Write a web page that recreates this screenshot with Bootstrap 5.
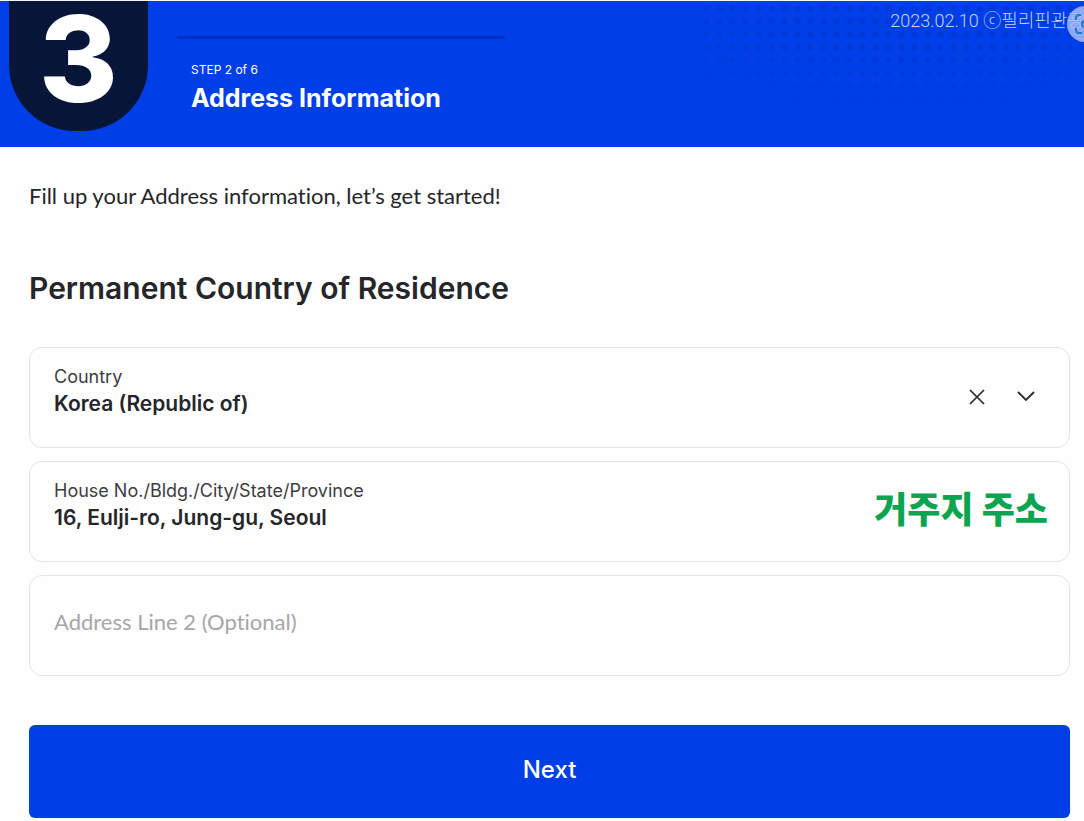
<!DOCTYPE html>
<html lang="en">
<head>
<meta charset="utf-8">
<meta name="viewport" content="width=device-width, initial-scale=1">
<title>Address Information</title>
<link href="https://cdn.jsdelivr.net/npm/bootstrap@5.3.0/dist/css/bootstrap.min.css" rel="stylesheet">
<style>
:root { --brand: #003fe8; --navy: #071638; --ink: #25252a; }
body { font-family: Lato, "Noto Sans CJK KR", sans-serif; font-variant-ligatures: none; color: var(--ink); background: #fefefe; }
.step-header { background: var(--brand); border-top: 1px solid #f4f6fd; min-height: 147px; padding-left: 9px; gap: 29px; }
.step-number { width: 139px; height: 130px; background: var(--navy); border-radius: 0 0 66px 66px; font: 800 120px/116px Inter, sans-serif; }
.step-line { width: 328px; height: 3px; margin-top: 35px; background: #0030c8; }
.step-copy { padding: 22px 0 0 14px; }
.step-count { font-size: 12px; line-height: 18px; font-family: Inter, sans-serif; }
.step-title { font: 700 25px/38px Inter, sans-serif; }
.dots { top: 0; right: 0; width: 384px; height: 117px; background: radial-gradient(circle at 50% 50%, #0038d6 2px, transparent 4px) 0 1px / 13px 13px; -webkit-mask-image: radial-gradient(ellipse 90% 100% at 55% 0, #000 40%, transparent 100%); mask-image: radial-gradient(ellipse 90% 100% at 55% 0, #000 40%, transparent 100%); }
.stamp { top: 7px; right: 0; font: 300 18px/26px Roboto, "Noto Sans CJK KR", sans-serif; color: #c5d2fb; }
.scan { top: 5px; right: -19px; width: 36px; height: 36px; background: rgba(160, 184, 248, .88); }
.page-body { padding: 32px 14px 3px 29px; }
.intro { font-size: 22px; line-height: 34px; margin-bottom: 54px; }
.section-title { font: 600 30px/42px Inter, sans-serif; margin-bottom: 38px; }
.field-list { gap: 13px; }
.field-box { border: 1px solid #e4e4e6; border-radius: 13px; height: 101px; padding: 0 24px; }
.field-box label { font: 400 18px/24px Inter, sans-serif; color: #3d3d42; }
.field-box input, .field-box select { appearance: none; border: 0; outline: 0; padding: 0; background: transparent; font: 600 21px/30px Inter, sans-serif; height: 30px; color: var(--ink); }
.field-box input::placeholder { color: #a6a6a8; font: 400 22px/30px Lato, sans-serif; font-variant-ligatures: none; }
.field-text { padding-bottom: 12px; }
.field-optional { padding-bottom: 6px; }
.field-actions { gap: 32px; padding: 0 10px 2px 0; }
.field-note { font: 900 36px/44px "Noto Sans CJK KR", sans-serif; color: #0ba450; margin-right: -3px; padding-bottom: 10px; }
.next-btn { background: var(--brand); color: #fff; height: 93px; border-radius: 6px; font: 500 24px/32px Inter, sans-serif; margin-top: 49px; border: 0; padding-bottom: 10px; }
</style>
</head>
<body>
<header class="step-header d-flex align-items-start position-relative overflow-hidden text-white">
  <div class="dots position-absolute"></div>
  <div class="step-number text-center flex-shrink-0">3</div>
  <div>
    <div class="step-line"></div>
    <div class="step-copy">
      <p class="step-count mb-0">STEP 2 of 6</p>
      <h1 class="step-title mb-0">Address Information</h1>
    </div>
  </div>
  <div class="stamp position-absolute text-nowrap">2023.02.10 ⓒ필리핀관광</div>
  <div class="scan position-absolute rounded-circle">
    <svg class="d-block" width="36" height="36" viewBox="0 0 36 36" fill="none" stroke="#1f78c8" stroke-width="2" aria-hidden="true"><path d="M9 14v-2q0-3 3-3h2M9 22v2q0 3 3 3h3M22 9h2q3 0 3 3v2M27 22v2q0 3-3 3h-2"/><circle cx="18" cy="18" r="3"/></svg>
  </div>
</header>
<main class="page-body">
  <p class="intro">Fill up your Address information, let’s get started!</p>
  <h2 class="section-title">Permanent Country of Residence</h2>
  <form>
    <div class="field-list d-flex flex-column">
      <div class="field-box d-flex align-items-center">
        <div class="field-text flex-grow-1 d-flex flex-column">
          <label for="country">Country</label>
          <select id="country"><option>Korea (Republic of)</option></select>
        </div>
        <div class="field-actions d-flex align-items-center">
          <button type="button" class="btn p-0 border-0 d-flex" aria-label="Clear country"><svg width="16" height="16" viewBox="0 0 16 16" fill="none" stroke="#2b2b2f" stroke-width="1.7"><path d="M1 1l14 14M15 1L1 15"/></svg></button>
          <button type="button" class="btn p-0 border-0 d-flex" aria-label="Open country list"><svg width="18" height="12" viewBox="0 0 18 12" fill="none" stroke="#2b2b2f" stroke-width="1.8"><path d="M1 1l8 8 8-8"/></svg></button>
        </div>
      </div>
      <div class="field-box d-flex align-items-center">
        <div class="field-text flex-grow-1 d-flex flex-column">
          <label for="address1">House No./Bldg./City/State/Province</label>
          <input id="address1" type="text" value="16, Eulji-ro, Jung-gu, Seoul">
        </div>
        <span class="field-note">거주지 주소</span>
      </div>
      <div class="field-box field-optional d-flex align-items-center">
        <input id="address2" class="w-100" type="text" placeholder="Address Line 2 (Optional)" aria-label="Address Line 2 (Optional)">
      </div>
    </div>
    <button type="button" class="btn next-btn w-100">Next</button>
  </form>
</main>
<script src="https://cdn.jsdelivr.net/npm/bootstrap@5.3.0/dist/js/bootstrap.bundle.min.js"></script>
</body>
</html>
